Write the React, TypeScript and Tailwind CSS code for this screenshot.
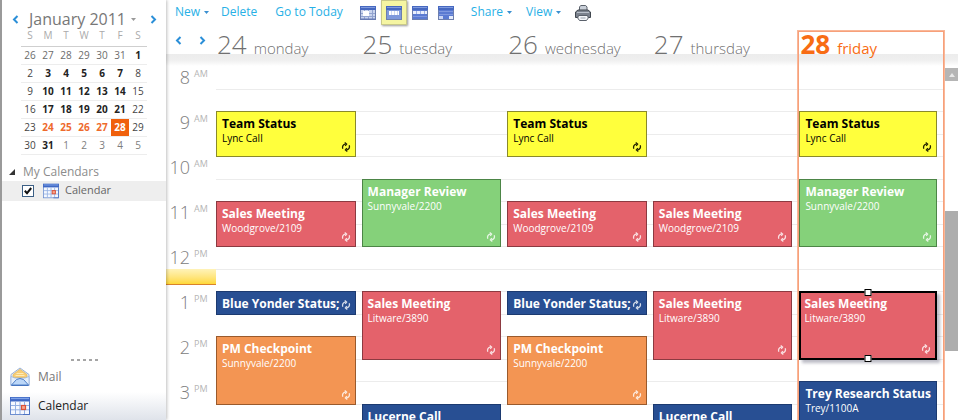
import React from "react";

type Tone = "yellow" | "green" | "red" | "blue" | "orange";

interface CalEvent {
  title: string;
  place?: string;
  tone: Tone;
  slot: string;
  selected?: boolean;
  recurring?: boolean;
}

interface Day {
  num: number;
  name: string;
  today?: boolean;
  events: CalEvent[];
}

const tones: Record<Tone, string> = {
  yellow: "bg-[#ffff3c] text-black",
  green: "bg-[#85d17a] text-white",
  red: "bg-[#e4626b] text-white",
  blue: "bg-[#284f93] text-white",
  orange: "bg-[#f39553] text-white",
};

const edges: Record<Tone, string> = {
  yellow: "border-[#8a8a2a]",
  green: "border-[#4c8546]",
  red: "border-[#8c3a41]",
  blue: "border-[#1c3a70]",
  orange: "border-[#9a5a2c]",
};

const teamStatus: CalEvent = { title: "Team Status", place: "Lync Call", tone: "yellow", slot: "row-[3/5]", recurring: true };
const manager: CalEvent = { title: "Manager Review", place: "Sunnyvale/2200", tone: "green", slot: "row-[6/9]", recurring: true };
const woodgrove: CalEvent = { title: "Sales Meeting", place: "Woodgrove/2109", tone: "red", slot: "row-[7/9]", recurring: true };
const litware: CalEvent = { title: "Sales Meeting", place: "Litware/3890", tone: "red", slot: "row-[11/14]", recurring: true };
const yonder: CalEvent = { title: "Blue Yonder Status;", tone: "blue", slot: "row-[11/12]", recurring: true };
const checkpoint: CalEvent = { title: "PM Checkpoint", place: "Sunnyvale/2200", tone: "orange", slot: "row-[13/16]", recurring: true };
const lucerne: CalEvent = { title: "Lucerne Call", tone: "blue", slot: "row-[16/19]" };
const trey: CalEvent = { title: "Trey Research Status", place: "Trey/1100A", tone: "blue", slot: "row-[15/19]" };

const days: Day[] = [
  { num: 24, name: "monday", events: [teamStatus, woodgrove, yonder, checkpoint] },
  { num: 25, name: "tuesday", events: [manager, litware, lucerne] },
  { num: 26, name: "wednesday", events: [teamStatus, woodgrove, yonder, checkpoint] },
  { num: 27, name: "thursday", events: [woodgrove, litware, lucerne] },
  { num: 28, name: "friday", today: true, events: [teamStatus, manager, { ...litware, selected: true }, trey] },
];

const hours = [
  ["8", "AM", "row-[1]"],
  ["9", "AM", "row-[3]"],
  ["10", "AM", "row-[5]"],
  ["11", "AM", "row-[7]"],
  ["12", "PM", "row-[9]"],
  ["1", "PM", "row-[11]"],
  ["2", "PM", "row-[13]"],
  ["3", "PM", "row-[15]"],
];

const slotRows = [
  "row-[1]", "row-[2]", "row-[3]", "row-[4]", "row-[5]", "row-[6]", "row-[7]", "row-[8]", "row-[9]",
  "row-[10]", "row-[11]", "row-[12]", "row-[13]", "row-[14]", "row-[15]", "row-[16]", "row-[17]", "row-[18]",
];

const weeks = [
  [26, 27, 28, 29, 30, 31, 1],
  [2, 3, 4, 5, 6, 7, 8],
  [9, 10, 11, 12, 13, 14, 15],
  [16, 17, 18, 19, 20, 21, 22],
  [23, 24, 25, 26, 27, 28, 29],
  [30, 31, 1, 2, 3, 4, 5],
];

function dateClass(week: number, col: number) {
  if (week === 4 && col === 5) return "bg-[#f0600c] text-white font-bold";
  if (week === 4 && col > 0 && col < 5) return "text-[#ee6a2c] font-bold";
  if (week === 0 && col < 6) return "text-[#6b6b6b]";
  if (week === 5 && col > 1) return "text-[#7d7d7d]";
  if (week === 0 || (week === 5 && col === 1)) return "text-[#222] font-bold";
  if (col === 0 || col === 6) return "text-[#444]";
  return "text-[#222] font-bold";
}

function Chevron({ dir }: { dir: "left" | "right" }) {
  return (
    <svg width="7" height="9" viewBox="0 0 7 9" fill="none" stroke="#2b8fd8" strokeWidth="2">
      <path d={dir === "left" ? "M5.500 1 2 4.500 5.500 8" : "M1.500 1 5 4.500 1.500 8"} />
    </svg>
  );
}

function Caret({ color }: { color: string }) {
  return (
    <svg width="5" height="3" viewBox="0 0 5 3" fill={color}>
      <path d="M0 0h5L2.500 3z" />
    </svg>
  );
}

function Recur({ dark }: { dark: boolean }) {
  return (
    <svg className="shrink-0" width="10" height="10" viewBox="0 0 10 10" fill="none" stroke={dark ? "#222200" : "#ffffff"} strokeOpacity={dark ? 1 : 0.8} strokeWidth="1.300">
      <path d="M1.800 6.800C.9 4.500 2.200 2.300 4.600 2.200" />
      <path d="M3.700.6 5.600 2.200 4.200 3.900" />
      <path d="M8.200 3.200c.9 2.300-.4 4.500-2.800 4.600" />
      <path d="M6.300 9.400 4.400 7.800 5.800 6.100" />
    </svg>
  );
}

function CalendarIcon({ size }: { size: number }) {
  return (
    <svg width={size} height={size} viewBox="0 0 20 20">
      <rect x=".5" y="1.500" width="19" height="17" fill="#f4f8ff" stroke="#6d8fd0" />
      <rect x="0" y="1" width="20" height="4.500" fill="#3f68c4" />
      <rect x="1" y="1.800" width="18" height="1.300" fill="#7fa3e8" />
      <path d="M1 9.500h18M1 13.800h18M5.500 6v12M10 6v12M14.500 6v12" stroke="#93b0e2" strokeWidth="1" />
      <rect x="11.500" y="9.500" width="4" height="4" fill="#f6a58c" stroke="#dc5238" strokeWidth="1.200" />
      <path d="M13 18.500h6.500V6" fill="none" stroke="#4e73c2" />
    </svg>
  );
}

function MailIcon() {
  return (
    <svg width="20" height="20" viewBox="0 0 20 20">
      <path d="M1 7.500 10 1l9 6.500V18.500H1z" fill="#eaf2fd" stroke="#9ab2d6" />
      <path d="M3 7.500 10 2.300l7 5.200V11H3z" fill="#f8cd74" stroke="#e0b45c" strokeWidth=".7" />
      <path d="M6.500 6.500h7M5.500 8.500h9" stroke="#fdebb8" />
      <path d="M1 9.500 5 11h10l4-1.500v9H1z" fill="#e3eefc" stroke="#8fb0e0" strokeWidth=".7" />
      <path d="M1.500 18 6.500 12.500q3.500-2 7 0L18.500 18z" fill="#bcd7f8" stroke="#4f80c8" strokeWidth="1" />
      <path d="M1.500 18.500h17" stroke="#4674c0" />
    </svg>
  );
}

function ViewIcon({ kind }: { kind: "day" | "work" | "week" | "month" }) {
  return (
    <svg width="16" height="14" viewBox="0 0 16 14">
      <rect x=".5" y=".5" width="15" height="13" fill={kind === "day" ? "#c9d4ee" : "#5b7bd2"} stroke="#6d7fae" />
      <rect x="0" y="0" width="16" height="4" fill="#4668c0" />
      <rect x="1" y="1" width="14" height="1" fill="#7f9ade" />
      {kind === "day" && (
        <>
          <path d="M1 7.500h14M1 10.500h14M4.500 4v9M8.500 4v9M12.500 4v9" stroke="#93a4d0" />
          <rect x="3" y="5" width="6" height="5" fill="#ffffff" />
          <path d="M1 13h14" stroke="#6279b8" />
        </>
      )}
      {kind === "work" && (
        <>
          <rect x="1" y="4" width="14" height="9" fill="#7f99dc" />
          <rect x="3" y="5" width="10" height="4" fill="#ffffff" />
          <path d="M5.500 5v4M8.500 5v4M11.500 5v4" stroke="#cfd9f2" />
        </>
      )}
      {kind === "week" && (
        <>
          <rect x="1" y="5" width="14" height="3" fill="#e9effc" />
          <path d="M4.500 5v3M8.500 5v3M12.500 5v3" stroke="#9fb2e4" />
          <path d="M1 10.500h14" stroke="#7f98e0" />
        </>
      )}
      {kind === "month" && (
        <>
          <path d="M1 5.500h14M1 8.500h14" stroke="#8099e0" />
          <rect x="1" y="10" width="4" height="3" fill="#cbd7f6" />
          <rect x="11" y="10" width="4" height="3" fill="#e6edfc" />
        </>
      )}
    </svg>
  );
}

function PrinterIcon() {
  return (
    <svg width="16" height="16" viewBox="0 0 16 16">
      <path d="M4.500 6V2l1.200-1.500h5L12 2v4z" fill="#c9cfd8" stroke="#5c636c" />
      <path d="M.5 7 3 5h10l2.500 2v5.500H.5z" fill="#7b828d" stroke="#41474f" />
      <path d="M2 7.500h12" stroke="#b9c0ca" />
      <path d="M3.500 10.500h9l.8 2.500-1.800 2.500h-7L2.700 13z" fill="#f4f6f9" stroke="#5a616b" />
      <path d="M5.500 13h5" stroke="#9aa3ae" />
    </svg>
  );
}

function EventCard({ event }: { event: CalEvent }) {
  const frame = event.selected
    ? "border-2 border-black pt-[3px] pl-[3px] shadow-[3px_3px_3px_rgba(60,60,90,0.35)]"
    : `border pt-[4px] ${edges[event.tone]} pl-[5px]`;
  return (
    <article className={`${event.slot} ${frame} ${tones[event.tone]} relative col-start-1 -mb-px mr-[6px] flex min-w-0`}>
      <div className="min-w-0 flex-1 whitespace-nowrap">
        <h3 className="text-[12px] leading-[16px] font-bold">{event.title}</h3>
        {event.place && <p className="text-[10px] leading-[13px]">{event.place}</p>}
      </div>
      {event.recurring && (
        <span className="mr-1 mb-1 self-end">
          <Recur dark={event.tone === "yellow"} />
        </span>
      )}
      {event.selected && (
        <>
          <span className="absolute -top-1 left-1/2 size-[7px] -translate-x-1/2 border border-black bg-white" />
          <span className="absolute -bottom-1 left-1/2 size-[7px] -translate-x-1/2 border border-black bg-white" />
        </>
      )}
    </article>
  );
}

const slotGrid = "grid grid-cols-1 grid-rows-[repeat(9,23px_22px)]";
const band = "h-[12px] shrink-0 bg-linear-to-b from-[#ececec] via-[#efefef] to-white";

function DayColumn({ day }: { day: Day }) {
  return (
    <section className={`min-w-0 ${day.today ? "border-x border-t border-[#f7a07a] shadow-[0_0_0_1px_#f9b799]" : "border-t border-transparent"}`}>
      <h2 className={`flex h-[22px] items-baseline gap-[7px] pl-px leading-[24px] whitespace-nowrap ${day.today ? "text-[#f86c14]" : "text-[#707070]"}`}>
        <span className={`text-[26px] ${day.today ? "font-bold" : "font-light"}`}>{day.num}</span>
        <span className={`text-[15px] ${day.today ? "font-normal" : "font-light"}`}>{day.name}</span>
      </h2>
      <div className={band} />
      <div className={slotGrid}>
        {slotRows.map((row, i) => (
          <div key={row} className={`${row} col-start-1 ${i > 0 ? "border-t border-[#ececec]" : ""}`} />
        ))}
        {day.events.map((event) => (
          <EventCard key={event.title + event.slot} event={event} />
        ))}
      </div>
    </section>
  );
}

function Sidebar() {
  return (
    <aside className="z-10 flex w-[166px] shrink-0 flex-col border-l-2 border-[#9a9a9a] bg-white shadow-[1px_0_3px_rgba(0,0,0,0.25)]">
      <header className="flex items-center pt-[9px] pr-[9px] pl-[10px] text-[#777]">
        <button aria-label="Previous month"><Chevron dir="left" /></button>
        <button className="ml-[10px] flex items-center gap-[5px] text-[16px] leading-[20px] whitespace-nowrap">
          January 2011 <Caret color="#999" />
        </button>
        <button aria-label="Next month" className="ml-auto"><Chevron dir="right" /></button>
      </header>
      <table className="ml-[19px] w-[126px] table-fixed border-collapse text-center text-[10px]">
        <thead>
          <tr className="h-[17px] border-b border-[#cfcfcf] leading-[12px] text-[#aaa]">
            {["S", "M", "T", "W", "T", "F", "S"].map((d, i) => (
              <th key={i} className="p-0 pb-1 font-normal">{d}</th>
            ))}
          </tr>
        </thead>
        <tbody>
          {weeks.map((week, w) => (
            <tr key={w} className="h-[18px] border-b border-[#ededed] leading-[17px]">
              {week.map((date, c) => (
                <td key={c} className={`p-0 ${dateClass(w, c)}`}>{date}</td>
              ))}
            </tr>
          ))}
        </tbody>
      </table>
      <div className="mt-2 flex h-[18px] items-center gap-2 pl-[7px] text-[12px] text-[#8c8c8c]">
        <svg width="6" height="6" viewBox="0 0 6 6" fill="#333"><path d="M6 0v6H0z" /></svg>
        My Calendars
      </div>
      <label className="flex h-[20px] items-center bg-[#eeeeee] pl-5 text-[11px] text-[#666]">
        <span className="grid size-3 place-items-center">
          <input type="checkbox" defaultChecked className="peer col-start-1 row-start-1 size-3 appearance-none border border-[#3c5f85] bg-white" />
          <svg className="pointer-events-none invisible z-10 col-start-1 row-start-1 peer-checked:visible" width="8" height="8" viewBox="0 0 8 8" fill="none" stroke="#111" strokeWidth="2">
            <path d="M.8 3.800 3 6.200 7.200 1" />
          </svg>
        </span>
        <span className="mr-[6px] ml-[9px]"><CalendarIcon size={16} /></span>
        Calendar
      </label>
      <div className="mt-auto flex justify-center gap-[3px]">
        {[0, 1, 2, 3, 4].map((i) => (
          <span key={i} className="h-[2px] w-[3px] bg-[#a5a5a5]" />
        ))}
      </div>
      <nav className="text-[12px]">
        <a href="#mail" className="flex h-[31px] items-center gap-2 pl-2 text-[#777]">
          <MailIcon /> Mail
        </a>
        <a href="#calendar" className="flex h-[28px] items-center gap-2 bg-linear-to-b from-white to-[#dfe3ea] pl-2 text-[#222]">
          <CalendarIcon size={20} /> Calendar
        </a>
      </nav>
    </aside>
  );
}

function Toolbar() {
  return (
    <div className="flex h-[31px] shrink-0 items-start pl-[9px] text-[12px] leading-[24px] whitespace-nowrap text-[#27b0e6]">
      <button className="flex items-center gap-1">New <Caret color="#3a8fd0" /></button>
      <button className="ml-3">Delete</button>
      <button className="ml-[18px]">Go to Today</button>
      <div className="ml-3 flex items-center">
        <button aria-label="Day" className="grid h-[25px] w-[26px] place-items-center"><ViewIcon kind="day" /></button>
        <button aria-label="Work week" className="grid h-[25px] w-[26px] place-items-center border border-[#c9c98a] bg-[#f5f5a2] shadow-[1px_1px_2px_rgba(0,0,0,0.4)]"><ViewIcon kind="work" /></button>
        <button aria-label="Week" className="grid h-[25px] w-[26px] place-items-center"><ViewIcon kind="week" /></button>
        <button aria-label="Month" className="grid h-[25px] w-[26px] place-items-center"><ViewIcon kind="month" /></button>
      </div>
      <button className="ml-3 flex items-center gap-1">Share <Caret color="#3a8fd0" /></button>
      <button className="ml-[14px] flex items-center gap-1">View <Caret color="#3a8fd0" /></button>
      <button aria-label="Print" className="ml-[14px] grid h-[25px] place-items-center"><PrinterIcon /></button>
    </div>
  );
}

export default function App() {
  return (
    <div className="flex h-screen overflow-hidden bg-white font-['Open_Sans','Noto_Sans',sans-serif]">
      <Sidebar />
      <main className="flex min-w-0 flex-1 flex-col">
        <Toolbar />
        <div className="grid grid-cols-[50px_repeat(5,minmax(0,1fr))_16px]">
          <div>
            <div className="flex h-[23px] items-center gap-[17px] pb-[5px] pl-[9px]">
              <button aria-label="Previous week"><Chevron dir="left" /></button>
              <button aria-label="Next week"><Chevron dir="right" /></button>
            </div>
            <div className={band} />
            <div className={slotGrid}>
              {hours.map(([h, half, row]) => (
                <div key={h} className={`${row} col-start-1 grid grid-cols-[24px_1fr] gap-1 leading-[22px]`}>
                  <span className="text-right text-[18px] font-light text-[#808080]">{h}</span>
                  <span className="text-[9px] leading-[16px] text-[#b5b5b5]">{half}</span>
                </div>
              ))}
              <div className="col-start-1 row-[10] h-4 border-b border-[#d9822b] bg-linear-to-b from-[#fff3b8] to-[#ffd934]" />
            </div>
          </div>
          {days.map((day) => (
            <DayColumn key={day.num} day={day} />
          ))}
          <div className="flex flex-col pr-[2px] pl-px">
            <div className="h-[23px]" />
            <div className={band} />
            <button aria-label="Scroll up" className="mt-[2px] grid h-[13px] shrink-0 place-items-center bg-[#b5b5b5]">
              <svg width="6" height="4" viewBox="0 0 6 4" fill="#e8e8e8"><path d="M3 0l3 4H0z" /></svg>
            </button>
            <div className="mt-[130px] h-[140px] shrink-0 bg-[#adadad]" />
          </div>
        </div>
      </main>
    </div>
  );
}
